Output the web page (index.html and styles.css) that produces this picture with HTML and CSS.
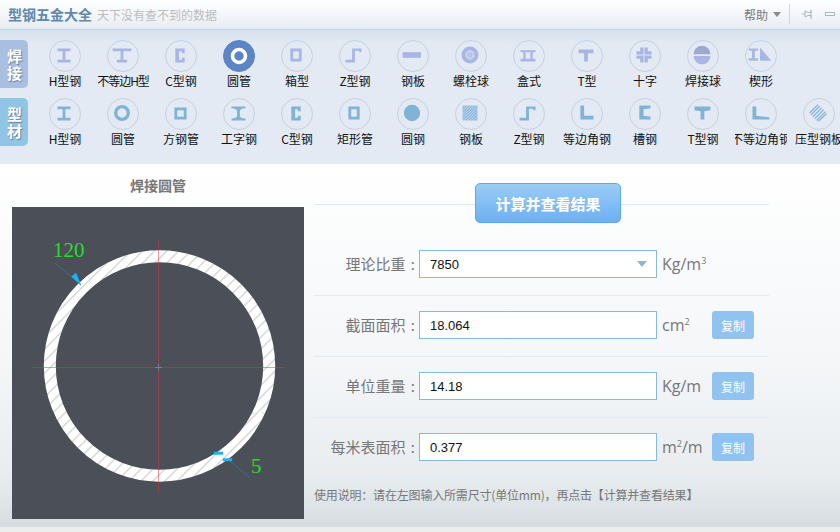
FILE: index.html
```html
<!DOCTYPE html>
<html lang="zh">
<head>
<meta charset="utf-8">
<title>型钢五金大全</title>
<link rel="stylesheet" href="styles.css">
</head>
<body>
<svg class="defs" aria-hidden="true">
  <defs>
    <pattern id="dots" width="3" height="3" patternUnits="userSpaceOnUse"><rect width="3" height="3" fill="#86b6da"/><rect width="1" height="1" fill="#d3e3ef"/><rect x="2" y="1" width="1" height="1" fill="#c3d9ea"/><rect x="1" y="2" width="1" height="1" fill="#d3e3ef"/></pattern>
    <pattern id="hatch" width="8.5" height="8.5" patternUnits="userSpaceOnUse" patternTransform="rotate(-45)"><rect width="8.5" height="8.5" fill="#fff"/><rect width="8.5" height="1" y="4" fill="#c4c4c4"/></pattern>
    <symbol id="i-h" viewBox="0 0 32 32"><path d="M9 9H23V12H17.5V21H23V24H9V21H14.5V12H9Z"/></symbol>
    <symbol id="i-hw" viewBox="0 0 32 32"><path d="M6 9H26V12H17.5V21H21.5V24H10.500V21H14.500V12H6Z"/></symbol>
    <symbol id="i-c" viewBox="0 0 32 32"><path d="M11 9H21V14H18V12H15V21H18V19H21V24H11Z"/></symbol>
    <symbol id="i-box" viewBox="0 0 32 32"><path fill-rule="evenodd" d="M10 9H22V23H10ZM13 12V20H19V12Z"/></symbol>
    <symbol id="i-z" viewBox="0 0 32 32"><path d="M7 21H14V9H24V13H21.500V11.500H17V24H7Z"/></symbol>
    <symbol id="i-plate" viewBox="0 0 32 32"><rect x="6" y="13" width="19.500" height="6"/></symbol>
    <symbol id="i-bolt" viewBox="0 0 32 32"><circle cx="16" cy="16" r="5" opacity=".45"/><path fill-rule="evenodd" d="M16 7A9 9 0 1 1 16 25A9 9 0 1 1 16 7ZM16 11A5 5 0 1 0 16 21A5 5 0 1 0 16 11Z"/><path fill-rule="evenodd" opacity=".75" d="M16 13.500A2.500 2.500 0 1 1 16 18.500A2.500 2.500 0 1 1 16 13.500ZM16 15A1 1 0 1 0 16 17A1 1 0 1 0 16 15Z"/></symbol>
    <symbol id="i-boxt" viewBox="0 0 32 32"><path d="M8 11H24V13H21V20H24V23H8V20H11V13H8ZM13.500 13V20H18.500V13Z" fill-rule="evenodd"/></symbol>
    <symbol id="i-t" viewBox="0 0 32 32"><path d="M8 10H24V14H18V23H14V14H8Z"/></symbol>
    <symbol id="i-cross" viewBox="0 0 32 32"><path d="M12 8H15.500V15.500H8V12H12ZM16.500 8H20V12H24V15.500H16.500ZM8 16.500H15.500V24H12V20H8ZM16.500 16.500H24V20H20V24H16.500Z"/></symbol>
    <symbol id="i-ball" viewBox="0 0 32 32"><path class="ball-top" d="M7 15.200A9 9 0 0 1 25 15.200Z"/><path d="M7 17A9 9 0 0 0 25 17Z"/></symbol>
    <symbol id="i-wedge" viewBox="0 0 32 32"><path d="M4 9H14V11.500H10.500V19.500H14V22H4V19.500H7.500V11.500H4ZM16 8L28 22H16Z"/></symbol>
    <symbol id="i-ring" viewBox="0 0 32 32"><path fill-rule="evenodd" d="M16 7.500A8.500 8.500 0 1 1 16 24.500A8.500 8.500 0 1 1 16 7.500ZM16 11A5 5 0 1 0 16 21A5 5 0 1 0 16 11Z"/></symbol>
    <symbol id="i-sq" viewBox="0 0 32 32"><path fill-rule="evenodd" d="M10 10H23V23H10ZM13 13V20H20V13Z"/></symbol>
    <symbol id="i-ibeam" viewBox="0 0 32 32"><path d="M9 9H24V11C20 11.500 18 12 18 14V19C18 21 20 21.500 24 22V24H9V22C13 21.500 15 21 15 19V14C15 12 13 11.500 9 11Z"/></symbol>
    <symbol id="i-solid" viewBox="0 0 32 32"><circle cx="16" cy="16" r="8.700"/></symbol>
    <symbol id="i-dots" viewBox="0 0 32 32"><rect x="8" y="8" width="16" height="16" fill="url(#dots)"/></symbol>
    <symbol id="i-l" viewBox="0 0 32 32"><path d="M10 8H14V19H24V23H10Z"/></symbol>
    <symbol id="i-ch" viewBox="0 0 32 32"><path d="M11 8H23V11L15.500 12V19L23 20V23H11Z"/></symbol>
    <symbol id="i-tw" viewBox="0 0 32 32"><path d="M8 9H25V13L18.500 14V23H14.500V14L8 13Z"/></symbol>
    <symbol id="i-lw" viewBox="0 0 32 32"><path d="M8 9H12V19L26 20.500V23H8Z"/></symbol>
    <symbol id="i-deck" viewBox="0 0 32 32"><path d="M7 16L16 7M8.500 18L18 8.500M10.500 20L20 10.500M12.500 22L22 12.500M14.500 24L24 14.500M16.500 25L25 16.500" fill="none" stroke="currentColor" stroke-width="1.300"/></symbol>
  </defs>
</svg>

<header class="titlebar">
  <strong class="app-name">型钢五金大全</strong>
  <span class="slogan">天下没有查不到的数据</span>
  <span class="help">帮助</span>
  <span class="caret"></span>
  <span class="bar-sep"></span>
  <svg class="win-btn" viewBox="0 0 12 12"><path d="M1 6H4M4 3L7 4.500H10V2V10.500V7.500H7L4 9Z" fill="none" stroke="#a9b8c8"/></svg>
  <svg class="win-btn" viewBox="0 0 12 12"><rect x="1.500" y="4.500" width="9" height="3" fill="none" stroke="#a9b8c8"/></svg>
</header>

<nav class="toolbar">
  <div class="tool-row weld">
    <div class="side-tab">焊<br>接</div>
    <div class="tool"><svg class="ico"><use href="#i-h"/></svg><span class="tool-name">H型钢</span></div>
    <div class="tool"><svg class="ico"><use href="#i-hw"/></svg><span class="tool-name tight">不等边H型</span></div>
    <div class="tool"><svg class="ico"><use href="#i-c"/></svg><span class="tool-name">C型钢</span></div>
    <div class="tool active"><svg class="ico"><circle cx="15" cy="15" r="6.500" fill="none" stroke="#fff" stroke-width="3.600"/></svg><span class="tool-name">圆管</span></div>
    <div class="tool"><svg class="ico"><use href="#i-box"/></svg><span class="tool-name">箱型</span></div>
    <div class="tool"><svg class="ico"><use href="#i-z"/></svg><span class="tool-name">Z型钢</span></div>
    <div class="tool"><svg class="ico"><use href="#i-plate"/></svg><span class="tool-name">钢板</span></div>
    <div class="tool"><svg class="ico"><use href="#i-bolt"/></svg><span class="tool-name">螺栓球</span></div>
    <div class="tool"><svg class="ico"><use href="#i-boxt"/></svg><span class="tool-name">盒式</span></div>
    <div class="tool"><svg class="ico"><use href="#i-t"/></svg><span class="tool-name">T型</span></div>
    <div class="tool"><svg class="ico"><use href="#i-cross"/></svg><span class="tool-name">十字</span></div>
    <div class="tool"><svg class="ico"><use href="#i-ball"/></svg><span class="tool-name">焊接球</span></div>
    <div class="tool"><svg class="ico"><use href="#i-wedge"/></svg><span class="tool-name">楔形</span></div>
  </div>
  <div class="tool-row profile">
    <div class="side-tab">型<br>材</div>
    <div class="tool"><svg class="ico"><use href="#i-h"/></svg><span class="tool-name">H型钢</span></div>
    <div class="tool"><svg class="ico"><use href="#i-ring"/></svg><span class="tool-name">圆管</span></div>
    <div class="tool"><svg class="ico"><use href="#i-sq"/></svg><span class="tool-name">方钢管</span></div>
    <div class="tool"><svg class="ico"><use href="#i-ibeam"/></svg><span class="tool-name">工字钢</span></div>
    <div class="tool"><svg class="ico"><use href="#i-c"/></svg><span class="tool-name">C型钢</span></div>
    <div class="tool"><svg class="ico"><use href="#i-box"/></svg><span class="tool-name">矩形管</span></div>
    <div class="tool"><svg class="ico"><use href="#i-solid"/></svg><span class="tool-name">圆钢</span></div>
    <div class="tool"><svg class="ico"><use href="#i-dots"/></svg><span class="tool-name">钢板</span></div>
    <div class="tool"><svg class="ico"><use href="#i-z"/></svg><span class="tool-name">Z型钢</span></div>
    <div class="tool"><svg class="ico"><use href="#i-l"/></svg><span class="tool-name">等边角钢</span></div>
    <div class="tool"><svg class="ico"><use href="#i-ch"/></svg><span class="tool-name">槽钢</span></div>
    <div class="tool"><svg class="ico"><use href="#i-tw"/></svg><span class="tool-name">T型钢</span></div>
    <div class="tool"><svg class="ico"><use href="#i-lw"/></svg><span class="tool-name">不等边角钢</span></div>
    <div class="tool wide"><svg class="ico"><use href="#i-deck"/></svg><span class="tool-name">压型钢板</span></div>
  </div>
</nav>

<main class="main">
  <section class="figure">
    <h2 class="figure-title">焊接圆管</h2>
    <svg class="drawing" viewBox="0 0 292 312">
      <circle cx="147.500" cy="159" r="109.700" fill="none" stroke="url(#hatch)" stroke-width="12"/>
      <g class="centre">
        <path d="M146.500 34V285M20 160.500H273"/>
      </g>
      <path class="cross-mark" d="M143 160.500H150M146.500 157V164"/>
      <path class="leader" d="M43 56L69 78M217 253L238 271"/>
      <path class="arrow" d="M59.500 69.500L64 66L69 78ZM202 245H211V247.500H202ZM211 251.500H220V254H211Z"/>
      <path class="arrow" d="M240 205.500L242 207M250 205L252 207"/>
      <text class="dim" x="41" y="50">120</text>
      <text class="dim" x="239" y="266">5</text>
    </svg>
  </section>

  <section class="form">
    <div class="action">
      <span class="action-line first"></span>
      <button class="calc" type="button">计算并查看结果</button>
      <span class="action-line"></span>
    </div>
    <div class="row">
      <span class="label">理论比重 :</span>
      <div class="field select">7850<span class="select-caret"></span></div>
      <span class="unit">Kg/m<sup>3</sup></span>
    </div>
    <div class="row">
      <span class="label">截面面积 :</span>
      <div class="field">18.064</div>
      <span class="unit">cm<sup>2</sup></span>
      <button class="copy" type="button">复制</button>
    </div>
    <div class="row">
      <span class="label">单位重量 :</span>
      <div class="field">14.18</div>
      <span class="unit">Kg/m</span>
      <button class="copy" type="button">复制</button>
    </div>
    <div class="row">
      <span class="label">每米表面积 :</span>
      <div class="field">0.377</div>
      <span class="unit">m<sup>2</sup>/m</span>
      <button class="copy" type="button">复制</button>
    </div>
    <p class="note">使用说明：请在左图输入所需尺寸(单位mm)，再点击【计算并查看结果】</p>
  </section>
</main>
<div class="foot"></div>
</body>
</html>
```
FILE: styles.css
```css
* { box-sizing: border-box; }
html, body { margin: 0; padding: 0; }
body {
  width: 840px;
  height: 532px;
  overflow: hidden;
  background: #eceeee;
  font-family: "Noto Sans CJK SC", "Liberation Sans", sans-serif;
  font-size: 12px;
  color: #222;
}
.defs { display: block; width: 0; height: 0; }

.titlebar {
  display: flex;
  align-items: center;
  height: 30px;
  padding: 0 0 1px 8px;
  background: linear-gradient(#ffffff, #e7ecf3);
  border-bottom: 1px solid #c3d0e2;
}
.app-name { font-size: 14px; font-weight: 700; color: #5f88a9; }
.slogan { margin-left: 5px; font-size: 12px; color: #bcbcbc; }
.help { margin-left: auto; font-size: 12px; color: #777; }
.caret {
  width: 0; height: 0;
  margin: 1px 8px 0 5px;
  border-left: 4px solid transparent;
  border-right: 4px solid transparent;
  border-top: 5px solid #8b8b8b;
}
.bar-sep { width: 1px; height: 20px; margin-right: 11px; background: #cdd6e0; }
.win-btn { width: 12px; height: 12px; margin-right: 11px; }
.win-btn:last-child { margin-right: 4px; }

.toolbar {
  height: 134px;
  padding-top: 10px;
  background: linear-gradient(#d6e1ee, #e3eaf3 14px);
}
.tool-row { display: flex; height: 48px; margin-bottom: 10px; }
.side-tab {
  flex: none;
  width: 28px;
  height: 48px;
  margin-right: 8px;
  padding: 7px 0 0 1px;
  border-radius: 0 5px 5px 0;
  text-align: center;
  font-size: 15px;
  font-weight: 700;
  line-height: 17px;
  color: #fff;
  text-shadow: 1px 1px 1px #6c7f99;
}
.weld .side-tab { background: #a9bfe2; }
.profile .side-tab { background: #90c5e5; }
.weld { color: #a9b5e4; }
.profile { color: #7fb3d7; }

.tool {
  flex: none;
  display: flex;
  flex-direction: column;
  align-items: center;
  width: 52px;
  margin: 0 3px;
  overflow: hidden;
}
.tool.wide { overflow: visible; }
.ico {
  flex: none;
  display: block;
  width: 32px;
  height: 32px;
  border: 1px solid #c5d1e3;
  border-radius: 50%;
  fill: currentColor;
  overflow: hidden;
}
.ico use { width: 32px; height: 32px; transform: translate(-1px, -1px); }
.ball-top { fill: #9fa9cf; }
.active .ico { background: #5b85c5; border-color: #5b85c5; }
.tool-name {
  flex: none;
  height: 18px;
  font-size: 12px;
  line-height: 18px;
  color: #111;
  white-space: nowrap;
}
.tight { letter-spacing: -1px; }

.main {
  display: flex;
  height: 363px;
  padding: 19px 0 0 12px;
  background: linear-gradient(#ffffff, #f4f6f8 55%, #e9edf0 85%, #d6dde0);
}
.figure { flex: none; width: 302px; }
.figure-title {
  width: 292px;
  height: 24px;
  margin: -8px 0 0;
  text-align: center;
  font-size: 14px;
  font-weight: 700;
  line-height: 20px;
  color: #777;
}
.drawing { display: block; width: 292px; height: 312px; margin-top: 8px; background: #4b4f57; }
.centre path { fill: none; stroke: #e8323c; stroke-width: 1; opacity: .5; }
.cross-mark { fill: none; stroke: #6f8296; }
.leader { fill: none; stroke: #2b7f9f; stroke-width: .8; }
.arrow { fill: #1ab3f5; stroke: #1ab3f5; stroke-width: .4; }
.dim { font-family: "Liberation Serif", serif; font-size: 21px; fill: #22e022; }

.form { flex: none; width: 455px; }
.action { display: flex; align-items: center; height: 40px; margin-bottom: 12px; }
.action-line { flex: 1; height: 1px; margin-top: 2px; background: #dbeaf7; }
.action-line.first { flex: none; width: 161px; }
.calc {
  flex: none;
  width: 146px;
  height: 40px;
  padding: 0;
  border: 1px solid #5ea8ee;
  border-radius: 5px;
  background: linear-gradient(#9accf4, #6cb0f5);
  font: 700 15px "Noto Sans CJK SC", sans-serif;
  color: #fff;
}
.row {
  display: flex;
  align-items: flex-start;
  height: 61px;
  padding-top: 15px;
  border-bottom: 1px solid #dfebf6;
}
.label {
  flex: none;
  width: 105px;
  padding-right: 4px;
  text-align: right;
  font-size: 15px;
  line-height: 28px;
  word-spacing: 2px;
  color: #777;
  white-space: nowrap;
}
.field {
  flex: none;
  position: relative;
  width: 238px;
  height: 28px;
  padding-left: 10px;
  border: 1px solid #86b8e0;
  background: #fff;
  font: 13px/28px "Liberation Sans", sans-serif;
  color: #111;
}
.select-caret {
  position: absolute;
  top: 10px;
  right: 9px;
  width: 0; height: 0;
  border-left: 5px solid transparent;
  border-right: 5px solid transparent;
  border-top: 6px solid #8fb6d6;
}
.unit {
  flex: none;
  width: 50px;
  margin-left: 5px;
  font: 16px/28px "Open Sans", sans-serif;
  color: #777;
  white-space: nowrap;
}
.unit sup { font-size: 9px; line-height: 0; vertical-align: 6px; }
.copy {
  flex: none;
  width: 42px;
  height: 28px;
  padding: 0;
  border: 0;
  border-radius: 3px;
  background: #90c3ef;
  font: 12px "Noto Sans CJK SC", sans-serif;
  color: #fff;
}
.note { margin: 7px 0 0; font-size: 12px; line-height: 18px; letter-spacing: -.18px; color: #777; white-space: nowrap; }
.foot { height: 5px; background: #eceeee; }
```
